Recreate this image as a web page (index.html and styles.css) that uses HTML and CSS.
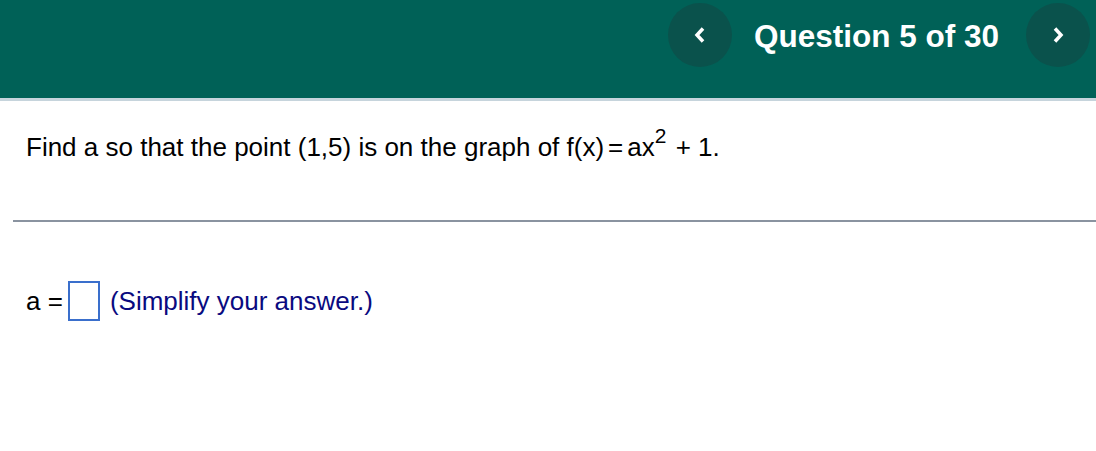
FILE: index.html
```html
<!DOCTYPE html>
<html lang="en">
<head>
    <meta charset="UTF-8">
    <meta name="viewport" content="width=device-width, initial-scale=1.0">
    <title>Question 5 of 30</title>
    <link rel="stylesheet" href="styles.css">
</head>
<body>
    <!-- Barra superior con navegacion -->
    <header class="topbar">
        <button class="nav-btn" aria-label="Previous question">
            <svg width="14" height="18" viewBox="0 0 14 18"><polyline points="10,2.5 4,9 10,15.5" /></svg>
        </button>
        <h1 class="title">Question 5 of 30</h1>
        <button class="nav-btn" aria-label="Next question">
            <svg width="14" height="18" viewBox="0 0 14 18"><polyline points="4,2.5 10,9 4,15.5" /></svg>
        </button>
    </header>

    <p class="question">
        Find a so that the point (1,5) is on the graph of
        <span class="math">f(x)<span class="eq">=</span>ax<sup>2</sup> + 1.</span>
    </p>

    <hr class="divider">

    <div class="answer">
        <span class="var">a =</span>
        <input class="answer-box" type="text">
        <span class="hint">(Simplify your answer.)</span>
    </div>
</body>
</html>
```

FILE: styles.css
```css
body {
    font-family: "Liberation Sans", Arial, sans-serif;
    background-color: #fff;
    color: #000;
    margin: 0;
    padding: 0;
}
.topbar {
    display: flex;
    justify-content: flex-end;
    align-items: flex-start;
    height: 101px;
    padding: 3px 6px 0 0;
    box-sizing: border-box;
    background-color: #006157;
    border-bottom: 3px solid #c6d4dc;
}
.nav-btn {
    width: 64px;
    height: 64px;
    border: none;
    border-radius: 50%;
    background-color: #0a524c;
    display: flex;
    align-items: center;
    justify-content: center;
    padding: 0;
    cursor: pointer;
}
.nav-btn svg polyline {
    fill: none;
    stroke: #fff;
    stroke-width: 3.5;
}
.title {
    color: #fff;
    font-size: 31.5px;
    font-weight: bold;
    margin: 0 27px 0 22px;
    line-height: 66px;
}
.question {
    font-size: 26px;
    line-height: 30px;
    margin: 31px 0 0 26px;
}
.eq {
    margin: 0 4px;
}
sup {
    font-size: 21px;
    line-height: 0;
    vertical-align: 13px;
    margin-right: 2px;
}
.divider {
    border: none;
    height: 2px;
    background-color: #8a93a0;
    margin: 58px 0 0 13px;
}
.answer {
    display: flex;
    align-items: center;
    margin: 59px 0 0 26px;
    font-size: 26px;
}
.answer-box {
    width: 32px;
    height: 40px;
    box-sizing: border-box;
    border: 2px solid #3a6fcc;
    margin: 0 10px 0 5px;
    padding: 0;
}
.hint {
    color: #0a0a80;
}
```
